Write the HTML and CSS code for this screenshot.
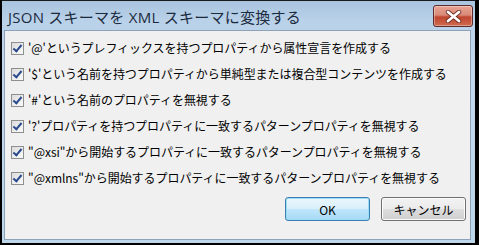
FILE: index.html
```html
<!DOCTYPE html>
<html lang="ja">
<head>
<meta charset="utf-8">
<link rel="stylesheet" href="styles.css">
</head>
<body>
<div class="window">
  <div class="titlebar">
    <span class="title">JSON スキーマを XML スキーマに変換する</span>
    <button class="close" type="button" aria-label="閉じる">
      <svg width="17" height="13" viewBox="0 0 17 13">
        <path d="M3 2 L14 11 M14 2 L3 11" stroke="#6b2a22" stroke-width="4.4" stroke-linecap="round" fill="none"/>
        <path d="M3 2 L14 11 M14 2 L3 11" stroke="#ffffff" stroke-width="2.8" stroke-linecap="round" fill="none"/>
      </svg>
    </button>
  </div>
  <div class="client">
    <ul class="options">
      <li class="option"><span class="box"></span><span class="label">'@'というプレフィックスを持つプロパティから属性宣言を作成する</span></li>
      <li class="option"><span class="box"></span><span class="label">'$'という名前を持つプロパティから単純型または複合型コンテンツを作成する</span></li>
      <li class="option"><span class="box"></span><span class="label">'#'という名前のプロパティを無視する</span></li>
      <li class="option"><span class="box"></span><span class="label">'?'プロパティを持つプロパティに一致するパターンプロパティを無視する</span></li>
      <li class="option"><span class="box"></span><span class="label">"@xsi"から開始するプロパティに一致するパターンプロパティを無視する</span></li>
      <li class="option"><span class="box"></span><span class="label">"@xmlns"から開始するプロパティに一致するパターンプロパティを無視する</span></li>
    </ul>
    <div class="buttons">
      <button class="btn btn-default" type="button">OK</button>
      <button class="btn" type="button">キャンセル</button>
    </div>
  </div>
</div>
</body>
</html>
```

FILE: styles.css
```css
html, body {
  margin: 0;
  padding: 0;
  background: #000;
}
body {
  width: 479px;
  height: 245px;
  overflow: hidden;
}
.window {
  box-sizing: border-box;
  width: 479px;
  height: 245px;
  border-top: 1px solid #1a1a1a;
  border-left: 2px solid #000;
  border-right: 4px solid #000;
  border-bottom: 2px solid #000;
  border-top-right-radius: 4px;
  background: linear-gradient(#a9c4df 0px, #b9d1e9 20px, #c2d7ec 60px, #bcd6ea 100%);
  display: flex;
  flex-direction: column;
  padding: 0 4px 3px 2px;
  font-family: "Noto Sans CJK JP", "Noto Sans", sans-serif;
}
.titlebar {
  height: 29px;
  display: flex;
  align-items: flex-start;
  justify-content: space-between;
  flex: none;
}
.title {
  font-family: "Open Sans", "Noto Sans CJK JP", sans-serif;
  font-size: 15px;
  line-height: 20px;
  margin-top: 6px;
  margin-left: 4px;
  color: #1b2a3d;
  letter-spacing: 0.25px;
}
.close {
  margin: 4px -2px 0 0;
  width: 40px;
  height: 22px;
  padding: 0;
  border: 1px solid #5c2b2a;
  border-radius: 3px;
  background: linear-gradient(#e8a493 0%, #d98a78 45%, #c0452e 55%, #cf6a52 100%);
  box-shadow: inset 0 0 0 1px rgba(255,255,255,0.35);
  display: flex;
  align-items: center;
  justify-content: center;
}
.close svg { display: block; }
.client {
  flex: 1;
  background: #f0f0f0;
  border: 1px solid #8da2b8;
  display: flex;
  flex-direction: column;
  padding: 4px 0 0 6px;
}
.options {
  list-style: none;
  margin: 0;
  padding: 0;
}
.option {
  height: 26px;
  display: flex;
  align-items: center;
  gap: 4px;
}
.box {
  box-sizing: border-box;
  width: 13px;
  height: 13px;
  border: 1px solid #8e8f8f;
  background: linear-gradient(135deg, #dcdcdc, #fbfbfb);
  position: relative;
  flex: none;
}
.box::after {
  content: "";
  position: absolute;
  left: 3px;
  top: 0px;
  width: 3px;
  height: 7px;
  border-right: 2px solid #2a4a8e;
  border-bottom: 2px solid #2a4a8e;
  transform: rotate(40deg);
}
.label {
  font-size: 12px;
  line-height: 16px;
  color: #000;
  white-space: nowrap;
  letter-spacing: -0.05px;
}
.buttons {
  display: flex;
  justify-content: flex-end;
  gap: 11px;
  margin-top: 6px;
  padding-right: 4px;
}
.btn {
  box-sizing: border-box;
  width: 85px;
  height: 24px;
  border: 1px solid #707070;
  border-radius: 3px;
  background: linear-gradient(#f2f2f2 0%, #ebebeb 50%, #dddddd 51%, #cfcfcf 100%);
  box-shadow: inset 0 0 0 1px #fcfcfc;
  font-family: "Noto Sans CJK JP", sans-serif;
  font-size: 12px;
  color: #000;
  padding: 0;
}
.btn-default {
  border-color: #3c7fb1;
  background: linear-gradient(#eaf6fd 0%, #d9f0fc 50%, #bee6fd 51%, #a7d9f5 100%);
  box-shadow: inset 0 0 0 1px #9bdcf7;
}
```
